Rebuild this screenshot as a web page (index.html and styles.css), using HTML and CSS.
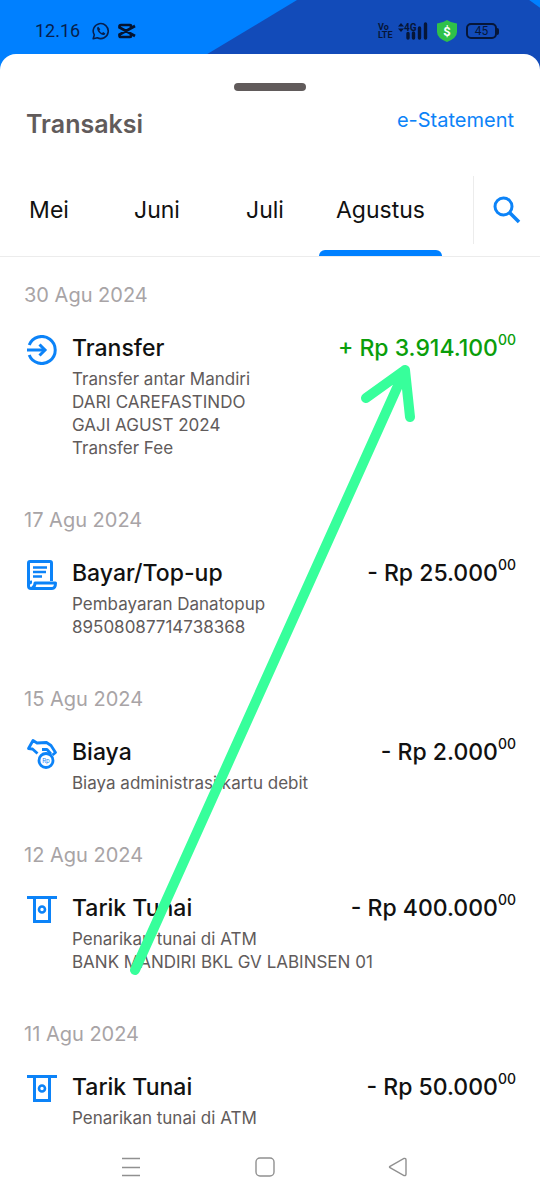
FILE: index.html
```html
<!DOCTYPE html>
<html lang="id">
<head>
<meta charset="utf-8">
<meta name="viewport" content="width=device-width, initial-scale=1">
<title>Transaksi</title>
<link rel="stylesheet" href="styles.css">
</head>
<body>
<svg class="symbols" aria-hidden="true">
  <symbol id="atm" viewBox="0 0 30 30">
    <path d="M0 2.500H30M7.500 2.500V26.500H22.500V2.500" fill="none" stroke="currentColor" stroke-width="3"/>
    <circle cx="15" cy="14.500" r="3" fill="none" stroke="currentColor" stroke-width="2.600"/>
  </symbol>
</svg>
<header class="status">
  <div class="status-group">
    <time class="clock">12.16</time>
    <svg width="18" height="18" viewBox="0 0 18 18" aria-label="WhatsApp"><path d="M1.200 16.800L2.300 12.900A7.500 7.500 0 1 1 5.300 15.700Z" fill="none" stroke="#071f4d" stroke-width="1.600" stroke-linejoin="round"/><path d="M6.300 4.700c-.8.200-1.300 1-1.200 2 .5 3 3.200 5.700 6.200 6.200 1 .1 1.800-.5 2-1.500l-2.100-1.300-1.100 1c-1.200-.5-2.200-1.500-2.700-2.700l.9-1.100z" fill="#071f4d"/></svg>
    <svg width="18" height="16" viewBox="0 0 18 16" aria-label="CapCut"><path d="M17 3L13 5V3Q13 2 12 2H3Q1.500 2 1.500 3.500V4.500L17 13M17 3L1.500 11.500V12.500Q1.500 14 3 14H12Q13 14 13 13V11" fill="none" stroke="#04132f" stroke-width="2.700"/></svg>
  </div>
  <div class="status-group status-right">
    <span class="volte"><span>Vo</span><span>LTE</span></span>
    <svg class="signal" width="30" height="18" viewBox="0 0 30 18" role="img" aria-label="4G">
      <path d="M0 4.500L3 1L6 4.500ZM0 6.500H6L3 10Z" fill="#061638"/>
      <text class="signal-text" x="6" y="9">4G</text>
      <path d="M10 11.500V16M15.500 11V16M21.500 6V16M27.500 2V16" stroke="#061638" stroke-width="3.400" stroke-linecap="round"/>
    </svg>
    <svg width="20" height="22" viewBox="0 0 20 22" role="img" aria-label="Keamanan"><path d="M10 0Q14 3 20 3.500V12Q20 18 10 22Q0 18 0 12V3.500Q6 3 10 0Z" fill="#2fc149"/><text class="shield-text" x="10" y="16">$</text></svg>
    <span class="battery">45</span>
  </div>
</header>
<main class="sheet">
  <div class="handle"></div>
  <div class="heading">
    <h1>Transaksi</h1>
    <a class="statement" href="#statement">e-Statement</a>
  </div>
  <div class="filter">
    <nav class="tabs" aria-label="Bulan">
      <button class="tab" type="button">Mei</button>
      <button class="tab" type="button">Juni</button>
      <button class="tab" type="button">Juli</button>
      <button class="tab tab-active" type="button">Agustus</button>
    </nav>
    <button class="search" type="button" aria-label="Cari">
      <svg width="28" height="28" viewBox="0 0 28 28"><circle cx="10.500" cy="10.500" r="8.500" fill="none" stroke="currentColor" stroke-width="3"/><path d="M17 17L26 26" stroke="currentColor" stroke-width="3.600"/></svg>
    </button>
  </div>
  <div class="list">
    <section class="day">
      <h2 class="date">30 Agu 2024</h2>
      <article class="item">
        <svg class="icon" viewBox="0 0 30 30"><path d="M2.200 10A13.500 13.500 0 1 1 2.200 20M0 15H18" fill="none" stroke="currentColor" stroke-width="3"/><path d="M12.500 9.500L18 15L12.500 20.500" fill="none" stroke="currentColor" stroke-width="3"/></svg>
        <div class="info">
          <div class="line"><h3>Transfer</h3><p class="amount amount-in">+ Rp 3.914.100<sup>00</sup></p></div>
          <p class="detail">Transfer antar Mandiri<br>DARI CAREFASTINDO<br>GAJI AGUST 2024<br>Transfer Fee</p>
        </div>
      </article>
    </section>
    <section class="day">
      <h2 class="date">17 Agu 2024</h2>
      <article class="item">
        <svg class="icon" viewBox="0 0 30 30"><path d="M24.500 21V3Q24.500 1.500 23 1.500H3Q1.500 1.500 1.500 3V26Q1.500 28.500 4 28.500H25Q28.500 28.500 28.500 23H8Q8 27 5 28M1.500 25Q1.500 22 5 22" fill="none" stroke="currentColor" stroke-width="3" stroke-linejoin="round"/><path d="M6 7.500H20M6 12H19M6 16.500H15" stroke="currentColor" stroke-width="2.600"/></svg>
        <div class="info">
          <div class="line"><h3>Bayar/Top-up</h3><p class="amount">- Rp 25.000<sup>00</sup></p></div>
          <p class="detail">Pembayaran Danatopup<br>89508087714738368</p>
        </div>
      </article>
    </section>
    <section class="day">
      <h2 class="date">15 Agu 2024</h2>
      <article class="item">
        <svg class="icon" viewBox="0 0 30 30"><path d="M10.500 14.500L5.500 10L1.500 9.500L6 1.500L10 4L19.500 3.500L24 6.500L28.500 13.500L25.500 16M15 10.500H20L24 15" fill="none" stroke="currentColor" stroke-width="2.800" stroke-linejoin="round"/><circle cx="19" cy="21.500" r="7" fill="#fff" stroke="currentColor" stroke-width="2.800"/><text class="coin-text" x="19" y="23.500">Rp</text></svg>
        <div class="info">
          <div class="line"><h3>Biaya</h3><p class="amount">- Rp 2.000<sup>00</sup></p></div>
          <p class="detail">Biaya administrasi kartu debit</p>
        </div>
      </article>
    </section>
    <section class="day">
      <h2 class="date">12 Agu 2024</h2>
      <article class="item">
        <svg class="icon"><use href="#atm"/></svg>
        <div class="info">
          <div class="line"><h3>Tarik Tunai</h3><p class="amount">- Rp 400.000<sup>00</sup></p></div>
          <p class="detail">Penarikan tunai di ATM<br>BANK MANDIRI BKL GV LABINSEN 01</p>
        </div>
      </article>
    </section>
    <section class="day">
      <h2 class="date">11 Agu 2024</h2>
      <article class="item">
        <svg class="icon"><use href="#atm"/></svg>
        <div class="info">
          <div class="line"><h3>Tarik Tunai</h3><p class="amount">- Rp 50.000<sup>00</sup></p></div>
          <p class="detail">Penarikan tunai di ATM</p>
        </div>
      </article>
    </section>
    <svg class="arrow" viewBox="0 0 290 620" aria-hidden="true"><path d="M7 613L277 13M238 41L277 13L282 60" fill="none" stroke="#37ff9b" stroke-width="10" stroke-linecap="round" stroke-linejoin="round"/></svg>
  </div>
</main>
<nav class="system" aria-label="Sistem">
  <button type="button" aria-label="Menu"><svg width="20" height="20" viewBox="0 0 20 20"><path d="M1 1.500H19M1 10.500H19M1 18.500H19"/></svg></button>
  <button type="button" aria-label="Beranda"><svg width="20" height="20" viewBox="0 0 20 20"><rect x="1" y="1" width="18" height="18" rx="4"/></svg></button>
  <button type="button" aria-label="Kembali"><svg width="20" height="20" viewBox="0 0 20 20"><path d="M2 9.300L16 1.500Q18 1 18 3V17Q18 19 16 18.500L2 10.700Q1 10 2 9.300Z"/></svg></button>
</nav>
</body>
</html>
```
FILE: styles.css
```css
* {
  box-sizing: border-box;
}

body {
  margin: 0;
  min-height: 100vh;
  display: flex;
  flex-direction: column;
  background: #fff;
  font-family: Inter, "Liberation Sans", sans-serif;
  color: #111;
}

h1, h2, h3, p {
  margin: 0;
}

button {
  border: 0;
  padding: 0;
  background: none;
  font: inherit;
  color: inherit;
}

svg {
  display: block;
  flex: none;
}

.symbols {
  position: absolute;
  width: 0;
  height: 0;
}

.status {
  position: relative;
  display: flex;
  justify-content: space-between;
  align-items: center;
  height: 78px;
  padding: 8px 43px 24px 35px;
  background: #0080ff;
}

.status::before {
  content: "";
  position: absolute;
  inset: 0;
  background: #124bb9;
  clip-path: polygon(55% 0, 98% 0, 100% 10%, 100% 100%, 31% 100%);
}

.status-group {
  position: relative;
  display: flex;
  align-items: center;
  gap: 8px;
}

.status-right {
  gap: 9px;
}

.clock {
  font: 18px/22px Roboto, sans-serif;
  color: #071f4d;
  margin-right: 4px;
}

.volte {
  display: flex;
  flex-direction: column;
  width: 11px;
  font: bold 9px/8px Roboto, sans-serif;
  color: #061638;
}

.signal-text {
  font: bold 10px Roboto, sans-serif;
  fill: #061638;
}

.shield-text {
  font: bold 13px Roboto, sans-serif;
  fill: #fff;
  text-anchor: middle;
}

.battery {
  position: relative;
  width: 31px;
  border: 2px solid #061638;
  border-radius: 5px;
  font: 12px/12px Roboto, sans-serif;
  text-align: center;
  color: #061638;
}

.battery::after {
  content: "";
  position: absolute;
  right: -4px;
  top: 3px;
  width: 2px;
  height: 7px;
  border-radius: 0 2px 2px 0;
  background: #061638;
}

.sheet {
  position: relative;
  flex: 1;
  margin-top: -24px;
  padding-top: 29px;
  border-radius: 16px 16px 0 0;
  background: #fff;
}

.handle {
  width: 72px;
  height: 8px;
  margin: 0 auto;
  border-radius: 4px;
  background: #615b5b;
}

.heading {
  display: flex;
  justify-content: space-between;
  align-items: flex-start;
  padding: 17px 26px 0;
}

h1 {
  font-size: 25px;
  line-height: 32px;
  font-weight: 600;
  color: #615b5b;
}

.statement {
  font-size: 20px;
  line-height: 24px;
  color: #0c83f8;
  text-decoration: none;
}

.filter {
  display: flex;
  align-items: center;
  height: 94px;
  margin-top: 23px;
  border-bottom: 1px solid #ececec;
  overflow: hidden;
}

.tabs {
  flex: 1;
  display: flex;
  align-self: stretch;
  margin-left: -5px;
  padding-right: 31px;
}

.tab {
  flex: 1 1 108px;
  font-size: 23px;
}

.tab-active {
  flex-basis: 123px;
  position: relative;
}

.tab-active::after {
  content: "";
  position: absolute;
  inset: auto 0 0;
  height: 6px;
  border-radius: 6px 6px 0 0;
  background: #0080ff;
}

.search {
  display: grid;
  place-items: center;
  width: 67px;
  height: 68px;
  border-left: 1px solid #ececec;
  color: #0c83f8;
}

.list {
  position: relative;
  padding: 26px 24px 0;
}

.day {
  padding-bottom: 48px;
}

.day:last-of-type {
  padding-bottom: 0;
}

.date {
  font-size: 20px;
  line-height: 24px;
  font-weight: 400;
  color: #a8a4a6;
}

.item {
  display: flex;
  gap: 15px;
  margin-top: 27px;
  padding-left: 3px;
}

.icon {
  width: 30px;
  height: 30px;
  margin-top: 1px;
  color: #0c83f8;
}

.coin-text {
  font: 6px Inter, sans-serif;
  fill: #0c83f8;
  text-anchor: middle;
}

.info {
  flex: 1;
}

.line {
  display: flex;
  justify-content: space-between;
}

h3,
.amount {
  font-size: 23px;
  line-height: 28px;
  font-weight: 500;
  white-space: nowrap;
}

.amount-in {
  color: #0a9e0a;
}

sup {
  font-size: 14px;
  line-height: 0;
  vertical-align: 11px;
}

.detail {
  margin-top: 6px;
  font-size: 17px;
  line-height: 23px;
  color: #615b5b;
}

.arrow {
  position: absolute;
  left: 128px;
  top: 100px;
  width: 290px;
  height: 620px;
}

.system {
  display: flex;
  justify-content: space-between;
  align-items: center;
  height: 66px;
  padding: 0 132px 0 121px;
}

.system svg {
  fill: none;
  stroke: #909090;
  stroke-width: 1.4;
}
```
